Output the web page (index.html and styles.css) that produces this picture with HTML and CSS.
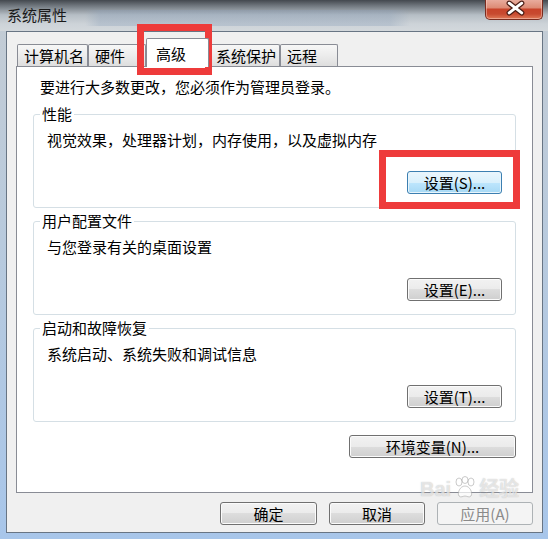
FILE: index.html
```html
<!DOCTYPE html>
<html lang="zh-CN">

<head>
    <meta charset="UTF-8" />
    <meta name="viewport" content="width=device-width, initial-scale=1.0" />
    <title>系统属性</title>
    <link rel="stylesheet" href="styles.css">
</head>

<body>
    <div class="window">
        <div class="titlebar">
            <span class="title">系统属性</span>
            <button class="close" aria-label="关闭">
                <svg width="58" height="21" viewBox="0 0 58 21">
                    <path d="M24 4 L37 14 M37 4 L24 14" stroke="#4a1d15" stroke-width="5.5" stroke-linecap="round" fill="none" />
                    <path d="M24 4 L37 14 M37 4 L24 14" stroke="#ffffff" stroke-width="3" stroke-linecap="round" fill="none" />
                </svg>
            </button>
        </div>

        <div class="client">
            <div class="tabs">
                <div class="tab w71">计算机名</div>
                <div class="tab w58">硬件</div>
                <div class="tab active">高级</div>
                <div class="tab w71">系统保护</div>
                <div class="tab w58">远程</div>
            </div>

            <div class="panel">
                <p class="notice">要进行大多数更改，您必须作为管理员登录。</p>

                <div class="group">
                    <div class="group-label">性能</div>
                    <div class="group-text">视觉效果，处理器计划，内存使用，以及虚拟内存</div>
                    <button class="btn btn-set default">设置(S)...</button>
                </div>

                <div class="group">
                    <div class="group-label">用户配置文件</div>
                    <div class="group-text">与您登录有关的桌面设置</div>
                    <button class="btn btn-set">设置(E)...</button>
                </div>

                <div class="group">
                    <div class="group-label">启动和故障恢复</div>
                    <div class="group-text">系统启动、系统失败和调试信息</div>
                    <button class="btn btn-set">设置(T)...</button>
                </div>

                <div class="env-row">
                    <button class="btn btn-env">环境变量(N)...</button>
                </div>
            </div>

            <div class="footer">
                <button class="btn btn-ok">确定</button>
                <button class="btn btn-cancel">取消</button>
                <button class="btn btn-cancel" disabled>应用(A)</button>
            </div>
        </div>

        <!-- red highlight marks drawn over the dialog -->
        <div class="mark mark-tab"></div>
        <div class="mark mark-btn"></div>

        <div class="watermark">
            <span>Bai</span>
            <svg class="paw" width="24" height="24" viewBox="0 0 24 24">
                <g fill="rgba(255,255,255,0.7)" stroke="rgba(150,150,150,0.5)" stroke-width="1">
                    <ellipse cx="6" cy="6" rx="3" ry="4" />
                    <ellipse cx="12" cy="4" rx="3" ry="3.5" />
                    <ellipse cx="18" cy="6" rx="3" ry="4" />
                    <path d="M12 10 C7 10 4 17 6 20 C8 22 10 20 12 20 C14 20 16 22 18 20 C20 17 17 10 12 10 Z" />
                </g>
            </svg>
            <span>经验</span>
        </div>
    </div>
</body>

</html>
```

FILE: styles.css
```css
/* Windows 7 style dialog */

body {
    margin: 0;
    font-family: "Noto Sans CJK SC", "Noto Sans", sans-serif;
    font-size: 15px;
    color: #000;
}

.window {
    position: relative;
    width: 548px;
    height: 539px;
    display: flex;
    flex-direction: column;
    overflow: hidden;
    background: linear-gradient(to bottom, #c4ccd4 0, #b8cadd 45%, #a8c6ea 100%);
}

.titlebar {
    height: 31px;
    flex: none;
    display: flex;
    justify-content: space-between;
    align-items: flex-start;
    background:
        linear-gradient(to right, rgba(140, 160, 185, 0) 85px, rgba(140, 160, 185, 0.35) 100px, rgba(140, 160, 185, 0.35) 390px, rgba(140, 160, 185, 0) 410px) 0 10px / 100% 16px no-repeat,
        linear-gradient(to bottom, #43484e 0, #727980 6px, #b6bec5 15px, #cdd3d8 24px, #d3d8dc 31px);
}

.title {
    padding-left: 7px;
    line-height: 30px;
    color: #1a1a1a;
}

.close {
    width: 58px;
    height: 21px;
    margin: -1px 5px 0 0;
    padding: 0;
    border: 1px solid #7a2c1f;
    border-top: none;
    border-radius: 0 0 5px 5px;
    background: linear-gradient(to bottom, #eab0a2 0, #dc8a74 45%, #c8432a 50%, #c84a30 75%, #e07a58 100%);
    box-shadow: inset 0 0 0 1px rgba(255, 220, 210, 0.45);
    display: flex;
    align-items: center;
    justify-content: center;
}

.close svg {
    display: block;
}

.client {
    flex: 1;
    margin: 0 5px 6px 6px;
    border: 1px solid #687584;
    background-color: #f0f0f0;
    padding: 6px 9px 0 9px;
    display: flex;
    flex-direction: column;
}

.tabs {
    height: 28px;
    display: flex;
    align-items: flex-end;
    padding-left: 1px;
}

.tab {
    box-sizing: border-box;
    height: 22px;
    padding: 0 0 0 6px;
    line-height: 21px;
    border: 1px solid #898c95;
    border-bottom: none;
    border-radius: 2px 2px 0 0;
    background: linear-gradient(to bottom, #f7f7f7 0, #ececec 50%, #dedede 100%);
    white-space: nowrap;
}

.w71 {
    width: 71px;
}

.w58 {
    width: 58px;
}

.tab.active {
    position: relative;
    z-index: 1;
    width: 63px;
    height: 29px;
    margin-bottom: -1px;
    padding: 6px 0 0 9px;
    line-height: 18px;
    background: #fff;
}

.panel {
    box-sizing: border-box;
    height: 427px;
    border: 1px solid #898c95;
    background-color: #fff;
    display: flex;
    flex-direction: column;
}

.notice {
    margin: 0;
    padding: 10px 0 0 23px;
    line-height: 20px;
}

.group {
    box-sizing: border-box;
    height: 94px;
    margin: 13px 16px 0 16px;
    border: 1px solid #d5dfe5;
    border-radius: 3px;
    display: flex;
    flex-direction: column;
}

.notice + .group {
    margin-top: 17px;
}

.group-label {
    align-self: flex-start;
    margin: -9px 0 0 6px;
    padding: 0 2px;
    line-height: 16px;
    background-color: #fff;
}

.group-text {
    margin: 9px 0 0 13px;
    line-height: 18px;
}

.btn {
    box-sizing: border-box;
    height: 23px;
    padding: 0;
    font-family: inherit;
    font-size: 15px;
    line-height: 21px;
    color: #000;
    border: 1px solid #707070;
    border-radius: 3px;
    background: linear-gradient(to bottom, #f2f2f2 0, #ebebeb 50%, #dddddd 50%, #cfcfcf 100%);
    box-shadow: inset 0 0 0 1px #fbfbfb;
    cursor: pointer;
}

.btn.default {
    border-color: #3c7fb1;
    background: linear-gradient(to bottom, #eaf6fd 0, #d9f0fc 50%, #bee6fd 50%, #a7d9f5 100%);
    box-shadow: inset 0 0 0 1px #e8f5fc;
}

.btn:disabled {
    color: #8a8a8a;
    border-color: #adb2b5;
    background: #f4f4f4;
    box-shadow: none;
    cursor: default;
}

.btn-set {
    width: 95px;
    align-self: flex-end;
    margin: auto 13px 13px 0;
}

.env-row {
    display: flex;
    justify-content: flex-end;
    margin: 13px 16px 0 0;
}

.btn-env {
    width: 167px;
}

.footer {
    display: flex;
    justify-content: flex-end;
    gap: 12px;
    margin-top: 9px;
}

.btn-ok {
    width: 97px;
}

.btn-cancel {
    width: 96px;
}

.mark {
    position: absolute;
    box-sizing: border-box;
    border: 7px solid #ee3b3b;
}

.mark-tab {
    left: 137px;
    top: 24px;
    width: 75px;
    height: 51px;
}

.mark-btn {
    left: 379px;
    top: 150px;
    width: 141px;
    height: 59px;
}

.watermark {
    position: absolute;
    left: 420px;
    top: 476px;
    height: 24px;
    display: flex;
    align-items: flex-end;
    gap: 2px;
    font-family: "Liberation Sans", "Noto Sans CJK SC", sans-serif;
    font-size: 20px;
    line-height: 22px;
    font-weight: bold;
    color: rgba(255, 255, 255, 0.6);
    text-shadow: 0 0 1px rgba(120, 120, 120, 0.5);
    pointer-events: none;
}

.paw {
    display: block;
}
```
